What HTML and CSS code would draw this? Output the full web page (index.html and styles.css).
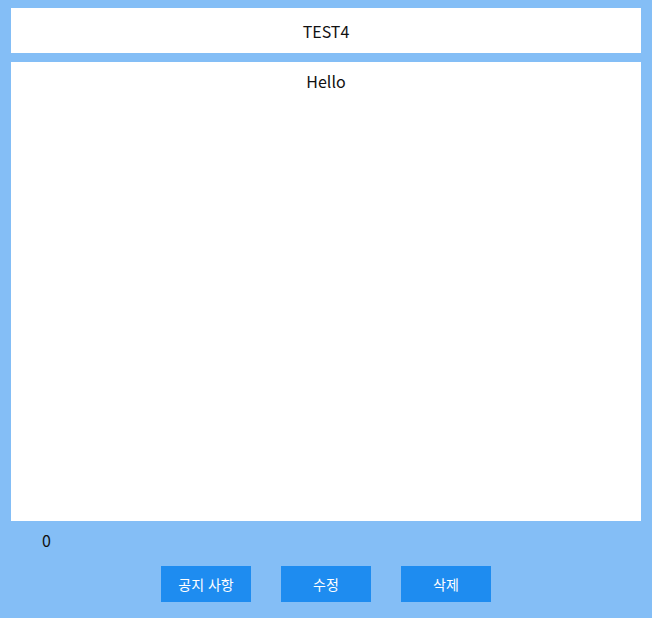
FILE: index.html
```html
<!DOCTYPE html>
<html lang="ko">
<head>
<meta charset="utf-8">
<title>TEST4</title>
<link rel="stylesheet" href="styles.css">
</head>
<body>
<div class="page">
  <header class="title-box">TEST4</header>
  <main class="content-box">Hello</main>
  <div class="count">0</div>
  <div class="actions">
    <button class="btn">공지 사항</button>
    <button class="btn">수정</button>
    <button class="btn">삭제</button>
  </div>
</div>
</body>
</html>
```
FILE: styles.css
```css
html, body {
  margin: 0;
  padding: 0;
}
body {
  background: #84bef6;
  font-family: "Noto Sans CJK KR", "Noto Sans", sans-serif;
  color: #111;
}
.page {
  width: 652px;
  height: 618px;
  box-sizing: border-box;
  padding: 8px 11px 0;
  display: flex;
  flex-direction: column;
}
.title-box {
  height: 45px;
  background: #fff;
  display: flex;
  align-items: center;
  justify-content: center;
  font-size: 16px;
}
.content-box {
  margin-top: 9px;
  height: 459px;
  box-sizing: border-box;
  background: #fff;
  text-align: center;
  font-size: 16px;
  padding-top: 7px;
  line-height: 24px;
}
.count {
  height: 45px;
  box-sizing: border-box;
  padding: 0 0 8px 31px;
  display: flex;
  align-items: center;
  font-size: 16px;
}
.actions {
  display: flex;
  justify-content: center;
  gap: 30px;
}
.btn {
  width: 90px;
  height: 36px;
  border: none;
  background: #1e8cf0;
  color: #fff;
  font-family: "Noto Sans CJK KR", sans-serif;
  font-size: 14px;
  padding: 0;
}
```
